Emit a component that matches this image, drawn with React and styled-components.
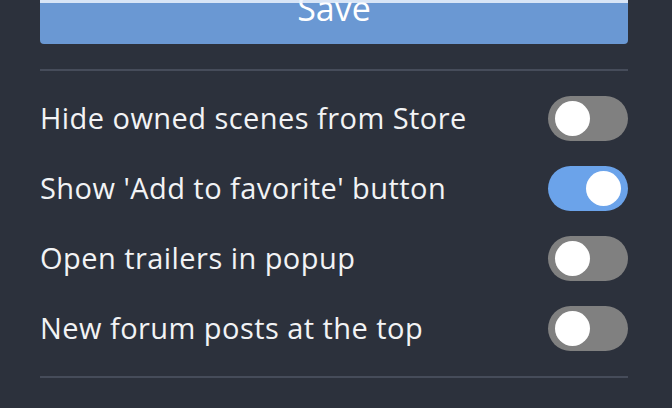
import React, { useState } from "react";
import styled, { createGlobalStyle } from "styled-components";

const Global = createGlobalStyle`
  html, body {
    margin: 0;
    padding: 0;
    background: #2c313c;
    overflow: hidden;
  }
  body {
    font-family: "Open Sans", "Noto Sans", sans-serif;
    -webkit-font-smoothing: antialiased;
  }
`;

const Page = styled.div`
  width: 672px;
  height: 408px;
  background: #2c313c;
  overflow: hidden;
`;

const Panel = styled.div`
  width: 588px;
  margin-left: 40px;
  display: flex;
  flex-direction: column;
`;

const SaveButton = styled.button`
  position: relative;
  margin-top: -26px;
  height: 70px;
  width: 100%;
  border: none;
  border-radius: 4px;
  background: #6a98d3;
  color: #ffffff;
  font-family: "Open Sans", "Noto Sans", sans-serif;
  font-size: 34px;
  font-weight: 400;
  display: flex;
  align-items: center;
  justify-content: center;
  padding: 0 0 2px;
  cursor: pointer;
  &::after {
    content: "";
    position: absolute;
    left: 0;
    right: 0;
    top: 26px;
    height: 3px;
    background: rgba(235, 242, 252, 0.85);
  }
`;

const Divider = styled.div`
  height: 2px;
  background: #464c5a;
  margin-top: ${(p) => p.$top || 0}px;
`;

const List = styled.div`
  display: flex;
  flex-direction: column;
  padding: 12px 0 13px;
`;

const Row = styled.div`
  height: 70px;
  display: flex;
  align-items: center;
  justify-content: space-between;
`;

const Label = styled.span`
  color: #f2f3f5;
  font-size: 29px;
  letter-spacing: 0.45px;
  font-weight: 400;
  padding-left: 0;
  padding-bottom: 2px;
`;

const Track = styled.div`
  width: 80px;
  height: 45px;
  box-sizing: border-box;
  border-radius: 23px;
  padding: 5px 7px;
  display: flex;
  align-items: center;
  justify-content: ${(p) => (p.$on ? "flex-end" : "flex-start")};
  background: ${(p) => (p.$on ? "#6ba3ea" : "#808080")};
  cursor: pointer;
`;

const Thumb = styled.div`
  width: 35px;
  height: 35px;
  border-radius: 50%;
  background: #ffffff;
`;

const items = [
  { label: "Hide owned scenes from Store", on: false },
  { label: "Show 'Add to favorite' button", on: true },
  { label: "Open trailers in popup", on: false },
  { label: "New forum posts at the top", on: false },
];

export default function App() {
  const [state, setState] = useState(items.map((i) => i.on));
  return (
    <Page>
      <Global />
      <Panel>
        <SaveButton>Save</SaveButton>
        <Divider $top={25} />
        <List>
          {items.map((it, i) => (
            <Row key={it.label}>
              <Label>{it.label}</Label>
              <Track
                $on={state[i]}
                onClick={() =>
                  setState((s) => s.map((v, j) => (j === i ? !v : v)))
                }
              >
                <Thumb />
              </Track>
            </Row>
          ))}
        </List>
        <Divider />
      </Panel>
    </Page>
  );
}
